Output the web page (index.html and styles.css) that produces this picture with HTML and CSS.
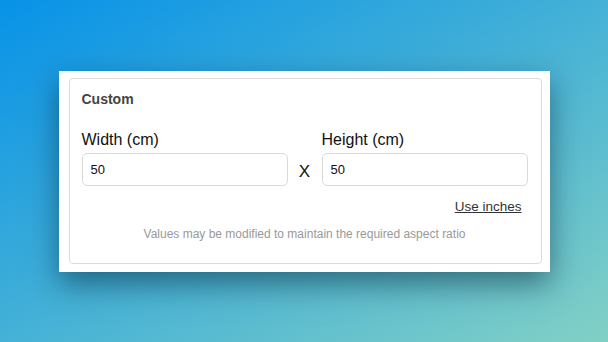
FILE: index.html
```html
<!DOCTYPE html>
<html lang="en">
<head>
    <meta charset="UTF-8">
    <meta name="viewport" content="width=device-width, initial-scale=1.0">
    <title>Custom size</title>
    <link rel="stylesheet" href="styles.css">
</head>
<body>
    <div class="card">
        <div class="custom-box">
            <h2 class="title">Custom</h2>

            <div class="size-row">
                <div class="form-group">
                    <label for="width">Width (cm)</label>
                    <input type="text" id="width" value="50">
                </div>
                <span class="times">X</span>
                <div class="form-group">
                    <label for="height">Height (cm)</label>
                    <input type="text" id="height" value="50">
                </div>
            </div>

            <div class="unit-switch">
                <a href="#" class="unit-link">Use inches</a>
            </div>

            <p class="note">Values may be modified to maintain the required aspect ratio</p>
        </div>
    </div>
</body>
</html>
```

FILE: styles.css
```css
html, body {
    height: 100%;
}

body {
    font-family: 'Liberation Sans', Arial, sans-serif;
    margin: 0;
    display: flex;
    align-items: center;
    justify-content: center;
    background: linear-gradient(to bottom right, #0792e8, #82d0c5);
}

.card {
    width: 491px;
    box-sizing: border-box;
    padding: 7px 8px 8px 10px;
    background: white;
    box-shadow: 0 12px 28px rgba(0, 30, 50, 0.5);
}

.custom-box {
    border: 1px solid #dcdcdc;
    border-radius: 4px;
    padding: 12px 13px 22px 12px;
}

.title {
    margin: 0 0 24px;
    font-size: 14px;
    line-height: 16px;
    font-weight: bold;
    color: #444;
}

.size-row {
    display: grid;
    grid-template-columns: 1fr 34px 1fr;
    align-items: end;
}

label {
    display: block;
    margin-bottom: 4px;
    font-size: 16px;
    line-height: 18px;
    color: #111;
}

input {
    display: block;
    width: 100%;
    height: 33px;
    box-sizing: border-box;
    padding: 0 8px;
    border: 1px solid #dadada;
    border-radius: 5px;
    font-family: inherit;
    font-size: 13px;
    color: #111;
}

.times {
    text-align: center;
    font-size: 17px;
    line-height: 20px;
    padding-bottom: 4px;
    color: #111;
}

.unit-switch {
    margin-top: 12px;
    padding-right: 6px;
    text-align: right;
    line-height: 16px;
}

.unit-link {
    font-size: 13.5px;
    color: #333;
}

.note {
    margin: 12px 0 0;
    text-align: center;
    font-size: 12px;
    line-height: 14px;
    color: #999;
}
```
